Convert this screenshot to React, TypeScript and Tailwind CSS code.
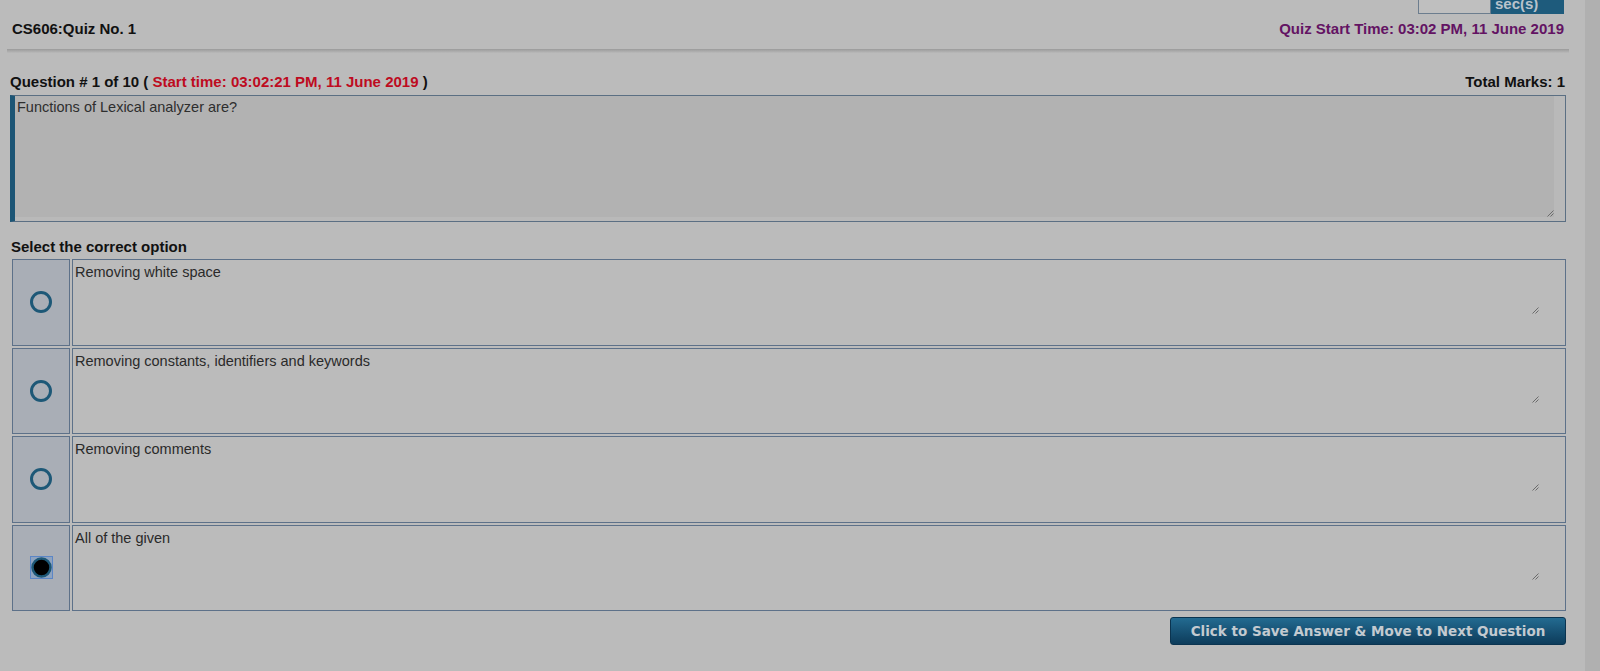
const options = [
  { text: "Removing white space", checked: false },
  { text: "Removing constants, identifiers and keywords", checked: false },
  { text: "Removing comments", checked: false },
  { text: "All of the given", checked: true },
];

function ResizeGrip() {
  return (
    <svg width="7" height="7" viewBox="0 0 7 7" className="block">
      <path d="M6.5 0.5 L0.5 6.5 M6.5 3.5 L3.5 6.5" stroke="#6b6b6b" strokeWidth="1" />
    </svg>
  );
}

function Radio({ checked }: { checked: boolean }) {
  if (checked) {
    return (
      <div className="flex h-[23px] w-[23px] items-center justify-center border border-[#5b86c6] bg-[#8ea3bf]">
        <svg width="21" height="21" viewBox="0 0 21 21">
          <circle cx="10.5" cy="10.5" r="9" fill="#000" stroke="#1d5877" strokeWidth="2.5" />
        </svg>
      </div>
    );
  }
  return <div className="h-[22px] w-[22px] rounded-full border-[3px] border-[#1d5877]" />;
}

function OptionRow({ text, checked }: { text: string; checked: boolean }) {
  return (
    <div className="flex h-[86.5px] gap-[2px]">
      <div className="flex w-[58px] items-center justify-center border border-[#5d7189] bg-[#a9aeb6]">
        <Radio checked={checked} />
      </div>
      <div className="flex-1 border border-[#5d7189]">
        <div className="relative h-[56px] w-[1466px] pl-[2px] pt-[4px] text-[14.5px] leading-[17px] text-[#2a2a2a]">
          {text}
          <div className="absolute bottom-[2px] right-[0px]">
            <ResizeGrip />
          </div>
        </div>
      </div>
    </div>
  );
}

export default function App() {
  return (
    <div className="flex h-[671px] overflow-hidden bg-[#bbbbbb] font-['Liberation_Sans',Arial,sans-serif]">
      <div className="w-[1585px]">
        <div className="ml-[7px] w-[1562px]">
          <div className="flex h-[14px] justify-end pr-[5px]">
            <div className="w-[73px] border border-t-0 border-[#6c7d8e] bg-[#bfbfbf]" />
            <div className="w-[73px] overflow-hidden bg-[#1e5b7c]">
              <div className="-mt-[5px] pl-[4px] text-[15px] font-bold leading-[17px] text-[#b9c3cc]">sec(s)</div>
            </div>
          </div>
          <div className="mt-[6px] flex justify-between pl-[5px] pr-[5px] text-[15px] font-bold leading-[17px]">
            <span className="text-[#111]">CS606:Quiz No. 1</span>
            <span className="text-[#631363]">Quiz Start Time: 03:02 PM, 11 June 2019</span>
          </div>
          <div className="mt-[12px] h-[4px] bg-gradient-to-b from-[#9a9a9a] to-[#b9b9b9]" />
        </div>

        <div className="ml-[10px] w-[1556px]">
          <div className="mt-[20px] flex justify-between text-[15px] font-bold leading-[17px] text-[#111]">
            <span>
              Question # 1 of 10 ( <span className="text-[#be0b1f]">Start time: 03:02:21 PM, 11 June 2019</span> )
            </span>
            <span className="pr-[1px]">Total Marks: 1</span>
          </div>

          <div className="mt-[5px] flex h-[127px] border border-l-[5px] border-[#5b6f83] border-l-[#1c5575] bg-[#b9b9b9]">
            <div className="flex flex-1 flex-col">
              <div className="relative flex-1 bg-[#b2b2b2] pl-[2px] pt-[3px] text-[14.5px] leading-[17px] text-[#2e2e2e]">
                Functions of Lexical analyzer are?
                <div className="absolute bottom-[0px] right-[0px]">
                  <ResizeGrip />
                </div>
              </div>
              <div className="h-[4px]" />
            </div>
            <div className="w-[11px]" />
          </div>

          <div className="mt-[16px] pl-[1px] text-[15px] font-bold leading-[17px] text-[#111]">Select the correct option</div>

          <div className="mt-[4px] flex flex-col gap-[2px] pl-[2px]">
            {options.map((o) => (
              <OptionRow key={o.text} text={o.text} checked={o.checked} />
            ))}
          </div>

          <div className="mt-[6px] flex justify-end">
            <button className="h-[28px] w-[396px] rounded-[3px] border border-[#0b3450] bg-gradient-to-b from-[#236b91] to-[#0d3c5b] font-['DejaVu_Sans',Verdana,sans-serif] text-[13.5px] font-bold text-[#c3cad0]">
              Click to Save Answer &amp; Move to Next Question
            </button>
          </div>
        </div>
      </div>
      <div className="w-[15px] bg-[#b0b0b0]" />
    </div>
  );
}
